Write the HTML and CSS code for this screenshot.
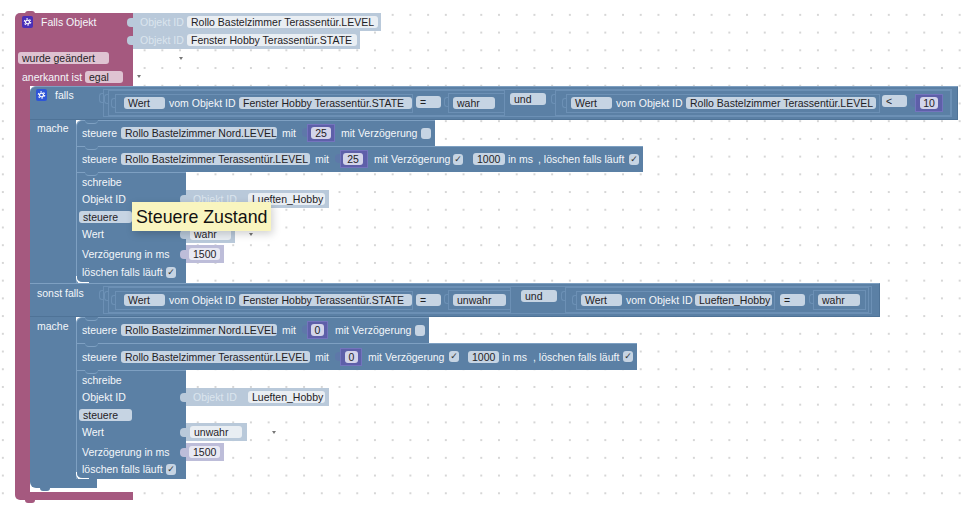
FILE: index.html
```html
<!DOCTYPE html>
<html lang="de">
<head>
<meta charset="utf-8">
<title>Blockly</title>
<link rel="stylesheet" href="styles.css">
</head>
<body>
<svg class="defs" width="0" height="0" aria-hidden="true">
  <symbol id="gear" viewBox="0 0 12 12">
    <circle cx="6" cy="6" r="2.1" fill="none" stroke="#fff" stroke-width="1.3"/>
    <circle cx="6" cy="6" r="3.5" fill="none" stroke="#fff" stroke-width="1.2" stroke-dasharray="1.8 1.87"/>
  </symbol>
</svg>
<main class="canvas">
  <div class="program">
    <div class="hat-row">
      <div class="hat-cell"><span class="gear gear-pink"><svg><use href="#gear"/></svg></span><span class="lbl ml-8">Falls Objekt</span></div>
      <div class="val val-light w-248"><span class="lbl faded ml-7 w-44">Objekt ID</span><span class="fld fld-light ml-3 w-191">Rollo Bastelzimmer Terassentür.LEVEL</span></div>
    </div>
    <div class="hat-row">
      <div class="hat-cell"></div>
      <div class="val val-light w-227"><span class="lbl faded ml-7 w-44">Objekt ID</span><span class="fld fld-light ml-3 w-170">Fenster Hobby Terassentür.STATE</span></div>
    </div>
    <div class="hat-row">
      <div class="hat-cell cell-field"><span class="fld fld-pink w-91">wurde geändert</span></div>
      <i class="arrow ml-46"></i>
    </div>
    <div class="hat-row hat-row-last">
      <div class="hat-cell cell-label"><span class="lbl w-59">anerkannt ist</span><span class="fld fld-pink ml-4 w-38">egal</span></div>
      <i class="arrow ml-4"></i>
    </div>

    <div class="hat-body">
      <div class="pink-bar"></div>
      <div class="falls">
        <!-- falls -->
        <div class="head w-928 head-first">
          <div class="head-label"><span class="gear gear-blue"><svg><use href="#gear"/></svg></span><span class="lbl ml-8">falls</span></div>
          <div class="out logic w-849">
            <div class="out cmp ml-4 w-397">
              <div class="out get ml-6 w-298"><span class="fld ml-8 w-41">Wert</span><span class="lbl ml-4 w-65">vom Objekt ID</span><span class="fld ml-5 w-173">Fenster Hobby Terassentür.STATE</span></div>
              <span class="fld ml-3 w-25 up-1">=</span>
              <div class="out val-out ml-7 w-57"><span class="fld ml-4 w-42">wahr</span></div>
            </div>
            <span class="fld fld-und ml-5 w-36">und</span>
            <div class="out cmp ml-9 w-396">
              <div class="out get ml-10 w-314"><span class="fld ml-4 w-41">Wert</span><span class="lbl ml-4 w-65">vom Objekt ID</span><span class="fld ml-5 w-190">Rollo Bastelzimmer Terassentür.LEVEL</span></div>
              <span class="fld ml-2 w-25 up-2">&lt;</span>
              <div class="num ml-8 w-28"><span class="fld fld-num ml-4 w-18">10</span></div>
            </div>
          </div>
        </div>
        <div class="branch">
          <div class="branch-label"><span class="lbl">mache</span></div>
          <div class="stack">
            <div class="stmt w-359 stmt-first">
              <span class="lbl w-35">steuere</span><span class="fld ml-4 w-156">Rollo Bastelzimmer Nord.LEVEL</span><span class="lbl ml-5 w-14">mit</span>
              <div class="num ml-11 w-28"><span class="fld fld-num ml-3 w-20">25</span></div>
              <span class="lbl ml-6 w-75">mit Verzögerung</span><span class="chk ml-5"></span>
            </div>
            <div class="stmt w-567">
              <span class="lbl w-35">steuere</span><span class="fld ml-4 w-189">Rollo Bastelzimmer Terassentür.LEVEL</span><span class="lbl ml-5 w-14">mit</span>
              <div class="num ml-11 w-28"><span class="fld fld-num ml-2 w-20">25</span></div>
              <span class="lbl ml-6 w-75">mit Verzögerung</span><span class="chk ml-4">✓</span>
              <span class="fld ml-10 w-32">1000</span><span class="lbl ml-3 w-24">in ms</span><span class="lbl ml-6 w-87">, löschen falls läuft</span><span class="chk ml-4">✓</span>
            </div>
            <div class="write write-first">
              <div class="wr wr-17"><div class="wr-cell"><span class="lbl">schreibe</span></div></div>
              <div class="wr wr-18"><div class="wr-cell"><span class="lbl">Objekt ID</span></div>
                <div class="val val-light w-143"><span class="lbl faded ml-7 w-44">Objekt ID</span><span class="fld fld-light ml-11 w-77">Lueften_Hobby</span></div></div>
              <div class="wr wr-17"><div class="wr-cell cell-steuere"><span class="fld w-53">steuere</span></div></div>
              <div class="wr wr-20"><div class="wr-cell"><span class="lbl">Wert</span></div>
                <div class="val val-light w-49"><span class="fld fld-light ml-4 w-41">wahr</span></div><i class="arrow ml-14"></i></div>
              <div class="wr wr-18"><div class="wr-cell"><span class="lbl">Verzögerung in ms</span></div>
                <div class="val val-lav w-38"><span class="fld fld-lav ml-3 w-31">1500</span></div></div>
              <div class="wr wr-18"><div class="wr-cell"><span class="lbl w-80">löschen falls läuft</span><span class="chk ml-4">✓</span></div></div>
            </div>
          </div>
        </div>
        <!-- sonst falls -->
        <div class="head w-850">
          <div class="head-label"><span class="lbl ml-1">sonst falls</span></div>
          <div class="out logic w-769">
            <div class="out cmp ml-4 w-403">
              <div class="out get ml-6 w-298"><span class="fld ml-8 w-41">Wert</span><span class="lbl ml-4 w-65">vom Objekt ID</span><span class="fld ml-5 w-173">Fenster Hobby Terassentür.STATE</span></div>
              <span class="fld ml-3 w-25">=</span>
              <div class="out val-out ml-7 w-63"><span class="fld ml-4 w-53">unwahr</span></div>
            </div>
            <span class="fld fld-und ml-10 w-36">und</span>
            <div class="out cmp ml-8 w-304">
              <div class="out get ml-10 w-199"><span class="fld ml-4 w-41">Wert</span><span class="lbl ml-4 w-65">vom Objekt ID</span><span class="fld ml-4 w-77">Lueften_Hobby</span></div>
              <span class="fld ml-5 w-25">=</span>
              <div class="out val-out ml-8 w-53"><span class="fld ml-4 w-42">wahr</span></div>
            </div>
          </div>
        </div>
        <div class="branch">
          <div class="branch-label branch-label-low"><span class="lbl">mache</span></div>
          <div class="stack">
            <div class="stmt w-353 stmt-first">
              <span class="lbl w-35">steuere</span><span class="fld ml-4 w-156">Rollo Bastelzimmer Nord.LEVEL</span><span class="lbl ml-5 w-14">mit</span>
              <div class="num ml-11 w-21"><span class="fld fld-num ml-3 w-13">0</span></div>
              <span class="lbl ml-7 w-76">mit Verzögerung</span><span class="chk ml-4"></span>
            </div>
            <div class="stmt stmt-tall w-561">
              <span class="lbl w-35">steuere</span><span class="fld ml-4 w-189">Rollo Bastelzimmer Terassentür.LEVEL</span><span class="lbl ml-5 w-14">mit</span>
              <div class="num ml-11 w-22"><span class="fld fld-num ml-4 w-13">0</span></div>
              <span class="lbl ml-6 w-76">mit Verzögerung</span><span class="chk ml-5">✓</span>
              <span class="fld ml-9 w-31">1000</span><span class="lbl ml-3 w-24">in ms</span><span class="lbl ml-7 w-87">, löschen falls läuft</span><span class="chk ml-3">✓</span>
            </div>
            <div class="write write-last">
              <div class="wr wr-17"><div class="wr-cell"><span class="lbl">schreibe</span></div></div>
              <div class="wr wr-18"><div class="wr-cell"><span class="lbl">Objekt ID</span></div>
                <div class="val val-light w-143"><span class="lbl faded ml-7 w-44">Objekt ID</span><span class="fld fld-light ml-11 w-77">Lueften_Hobby</span></div></div>
              <div class="wr wr-17"><div class="wr-cell cell-steuere"><span class="fld w-53">steuere</span></div></div>
              <div class="wr wr-20"><div class="wr-cell"><span class="lbl">Wert</span></div>
                <div class="val val-light w-61"><span class="fld fld-light ml-4 w-52">unwahr</span></div><i class="arrow ml-25"></i></div>
              <div class="wr wr-18"><div class="wr-cell"><span class="lbl">Verzögerung in ms</span></div>
                <div class="val val-lav w-38"><span class="fld fld-lav ml-3 w-31">1500</span></div></div>
              <div class="wr wr-16"><div class="wr-cell"><span class="lbl w-80">löschen falls läuft</span><span class="chk ml-4">✓</span></div></div>
            </div>
          </div>
        </div>
        <div class="falls-foot"></div>
      </div>
    </div>
    <div class="hat-foot"></div>
  </div>
  <div class="tooltip">Steuere Zustand</div>
</main>
</body>
</html>
```
FILE: styles.css
```css
* { box-sizing: border-box; }
html, body { margin: 0; padding: 0; }
body { width: 969px; height: 507px; overflow: hidden; background: #fff; font-family: "Liberation Sans", Arial, sans-serif; font-size: 10.5px; color: #222; }
.defs { display: block; height: 0; }
.canvas { position: relative; width: 969px; height: 507px; overflow: hidden;
  background-color: #fff;
  background-image: radial-gradient(circle at center, #d6d6d6 0, #d6d6d6 0.7px, transparent 1px);
  background-size: 17.72px 17.72px;
  background-position: -6px 6px; }

/* the program is one stack of blocks, dropped on the workspace */
.program { position: absolute; left: 15px; top: 13px; width: 943px; }

/* hat block */
.hat-row { display: flex; align-items: center; height: 18px; }
.hat-row-last { height: 19px; }
.hat-cell { flex: none; width: 118px; height: 100%; background: #a5597f; display: flex; align-items: center; padding-left: 7px; }
.hat-row:first-child .hat-cell { border-top-left-radius: 5px; position: relative; }
.hat-row:first-child .hat-cell::before { content: ""; position: absolute; left: 10px; top: -2px; width: 10px; height: 3px; background: #a5597f; border-radius: 5px 5px 0 0; }
.cell-field { padding-left: 3px; }
.hat-body { display: flex; align-items: stretch; }
.pink-bar { flex: none; width: 15px; background: #a5597f; margin-bottom: -2px; }
.hat-foot { position: relative; width: 118px; height: 8px; margin-top: 2px; background: #a5597f; border-bottom-left-radius: 5px; }
.hat-foot::after { content: ""; position: absolute; left: 10px; bottom: -3px; width: 10px; height: 3px; background: #a5597f; border-radius: 0 0 5px 5px; }

/* text + fields */
.lbl { flex: none; display: inline-block; color: #f4f7fa; white-space: nowrap; line-height: 12px; }
.faded { color: #dbe5ee; }
.fld { flex: none; display: inline-block; height: 12px; line-height: 12px; padding-left: 4px; border-radius: 3px; background: #c6d4e3; color: #1f2226; white-space: nowrap; overflow: hidden; }
.fld-light { background: #e9eef3; }
.fld-pink { background: #dfc3d2; }
.fld-lav { background: #e9e9f3; }
.fld-num { background: #d3d4ea; padding-left: 0; text-align: center; }
.fld-und { align-self: flex-start; margin-top: 3px; }
.up-1 { margin-top: -2px; }
.up-2 { margin-top: -4px; }

.gear { flex: none; display: inline-block; width: 11px; height: 12px; border-radius: 2px; }
.gear svg { display: block; width: 11px; height: 12px; }
.gear-pink { background: #4a2fb8; }
.gear-blue { background: #2e55d8; }
.arrow { flex: none; width: 0; height: 0; border-left: 2px solid transparent; border-right: 2px solid transparent; border-top: 3px solid #777; }
.chk { flex: none; display: inline-block; width: 10px; height: 11px; border-radius: 3px; background: #c6d4e3; color: #333; font: 9px/11px "DejaVu Sans", sans-serif; text-align: center; }

/* value blocks */
.val { flex: none; position: relative; height: 18px; display: flex; align-items: center; }
.val::before { content: ""; position: absolute; left: -6px; top: 5px; width: 6px; height: 9px; border-radius: 4px 0 0 4px; background: inherit; }
.val-light { background: #b9c9da; }
.val-lav { background: #bdbdd9; }
.num { flex: none; position: relative; height: 18px; background: #5e5fa9; border: 1px solid #7374bd; display: flex; align-items: center; }
.num::before { content: ""; position: absolute; left: -6px; top: 3px; width: 5px; height: 9px; border-radius: 4px 0 0 4px; background: #5e78a9; }

/* falls block */
.falls { flex: none; width: 928px; margin-bottom: 2px; }
.head { position: relative; display: flex; align-items: center; height: 34px; background: #5b80a5; border-top: 1px solid #7ea0c2; border-right: 1px solid #4f7397; border-bottom: 1px solid #4f7397; }
.head-first { border-top-left-radius: 6px; }
.head-label { flex: none; width: 73px; align-self: flex-start; display: flex; align-items: center; height: 16px; padding-left: 6px; margin-top: 1px; }
.head-first .head-label { margin-top: 0; }
.out { flex: none; position: relative; display: flex; align-items: center; border: 1px solid #6c90b5; }
.out::before { content: ""; position: absolute; left: -5px; top: 3px; width: 4px; height: 8px; border: 1px solid #6c90b5; border-right: 0; border-radius: 3px 0 0 3px; }
.logic { height: 28px; }
.cmp { height: 26px; }
.get { height: 19px; }
.val-out { height: 20px; }

.branch { display: flex; }
.branch-label { flex: none; width: 46px; background: #5b80a5; padding: 2px 0 0 7px; }
.branch-label-low { padding-top: 3px; }
.stack { flex: none; width: 882px; display: flex; flex-direction: column; }
.stmt { position: relative; display: flex; align-items: center; height: 26px; padding: 0 0 1px 6px; background: #5b80a5; border-top: 1px solid #7ea0c2; border-left: 1px solid #7ea0c2; }
.stmt > .lbl:first-child { margin-left: -1px; }
.stmt::before, .write::before { content: ""; position: absolute; left: 8px; top: -1px; width: 13px; height: 3px; background: #5b80a5; border-bottom: 1px solid #7ea0c2; border-radius: 0 0 6px 6px; }
.stmt-first { border-top-left-radius: 6px; }
.stmt-tall { height: 27px; }

.write { position: relative; width: 110px; background: #5b80a5; border-top: 1px solid #7ea0c2; border-left: 1px solid #7ea0c2; }
.write::after { content: ""; position: absolute; left: -1px; bottom: -1px; width: 12px; height: 6px; border-left: 1px solid #fff; border-bottom: 2px solid #fff; border-bottom-left-radius: 6px; }
.wr { display: flex; align-items: center; }
.wr-cell { flex: none; width: 109px; display: flex; align-items: center; padding-left: 5px; }
.cell-steuere { padding-left: 2px; }
.wr-16 { height: 16px; }
.wr-17 { height: 17px; }
.wr-18 { height: 18px; }
.wr-20 { height: 20px; align-items: flex-start; }
.wr-20 .wr-cell { height: 18px; }
.wr-20 .arrow { margin-top: 8px; }
.write-first { height: 111px; }
.write-last { height: 109px; }
.falls-foot { position: relative; width: 67px; height: 9px; background: #5b80a5; border-radius: 0 0 0 6px; }
.falls-foot::after { content: ""; position: absolute; left: 10px; bottom: -3px; width: 10px; height: 3px; background: #5b80a5; border-radius: 0 0 5px 5px; }

/* tooltip over the block */
.tooltip { position: absolute; left: 132px; top: 202px; width: 139px; height: 29px; padding: 1px 0 0 4px; background: #f9f5bf; color: #111; font-size: 17.8px; line-height: 29px; box-shadow: 2px 3px 8px rgba(0,0,0,.18); white-space: nowrap; }

/* spacing and width scale */
.ml-1{margin-left:1px}.ml-2{margin-left:2px}.ml-3{margin-left:3px}.ml-4{margin-left:4px}.ml-5{margin-left:5px}.ml-6{margin-left:6px}.ml-7{margin-left:7px}.ml-8{margin-left:8px}.ml-9{margin-left:9px}.ml-10{margin-left:10px}.ml-11{margin-left:11px}.ml-14{margin-left:14px}.ml-25{margin-left:25px}.ml-46{margin-left:46px}
.w-13{width:13px}.w-14{width:14px}.w-18{width:18px}.w-20{width:20px}.w-21{width:21px}.w-22{width:22px}.w-24{width:24px}.w-25{width:25px}.w-28{width:28px}.w-31{width:31px}.w-32{width:32px}.w-35{width:35px}.w-36{width:36px}.w-38{width:38px}.w-41{width:41px}.w-42{width:42px}.w-44{width:44px}.w-49{width:49px}.w-52{width:52px}.w-53{width:53px}.w-57{width:57px}.w-59{width:59px}.w-61{width:61px}.w-63{width:63px}.w-65{width:65px}.w-75{width:75px}.w-76{width:76px}.w-77{width:77px}.w-80{width:80px}.w-87{width:87px}.w-91{width:91px}
.w-143{width:143px}.w-156{width:156px}.w-170{width:170px}.w-173{width:173px}.w-189{width:189px}.w-190{width:190px}.w-191{width:191px}.w-199{width:199px}.w-227{width:227px}.w-248{width:248px}.w-298{width:298px}.w-304{width:304px}.w-314{width:314px}.w-353{width:353px}.w-359{width:359px}.w-396{width:396px}.w-397{width:397px}.w-403{width:403px}.w-561{width:561px}.w-567{width:567px}.w-769{width:769px}.w-849{width:849px}.w-850{width:850px}.w-928{width:928px}
```
